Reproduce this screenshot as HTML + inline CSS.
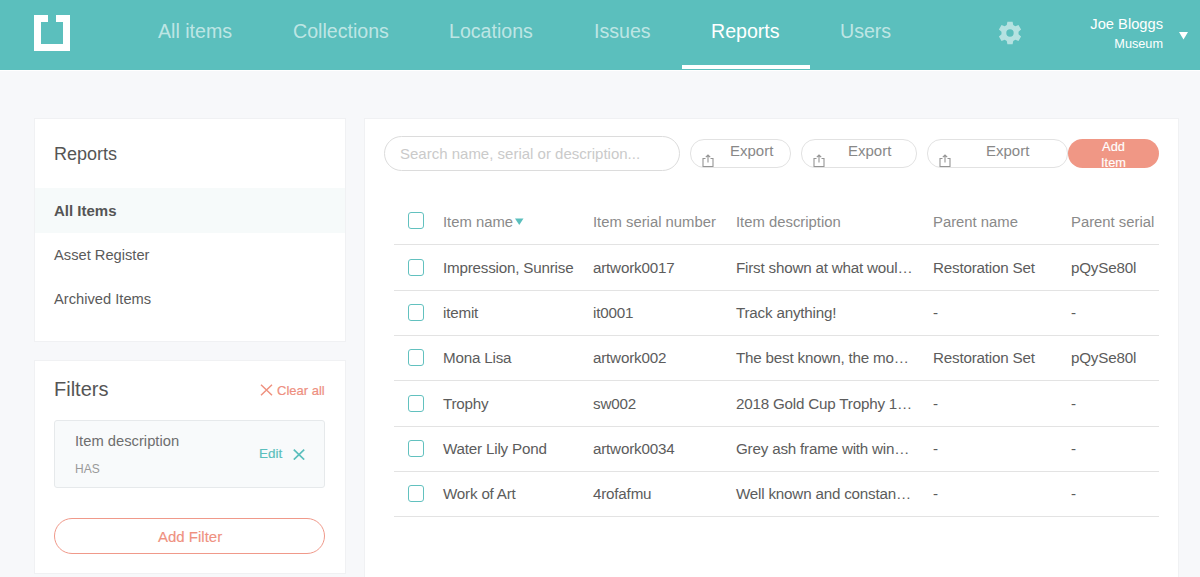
<!DOCTYPE html>
<html><head><meta charset="utf-8">
<style>
*{box-sizing:border-box;margin:0;padding:0}
html,body{width:1200px;height:577px;overflow:hidden}
body{background:#f7f8fa;font-family:"Liberation Sans",sans-serif;position:relative;color:#555}
.abs{position:absolute;white-space:nowrap}
#hdr{position:absolute;left:0;top:0;width:1200px;height:70px;background:#5bbfbd}
.logo{position:absolute;left:34px;top:15px;width:36px;height:36px;border:7px solid #fff}
.logo:after{content:"";position:absolute;left:7px;top:-7px;width:8px;height:7px;background:#5bbfbd}
.nav{position:absolute;top:20px;font-size:19.6px;color:rgba(255,255,255,.62);line-height:22px}
.nav.act{color:#fff}
.uline{position:absolute;left:682px;top:65px;width:128px;height:4px;background:#fff}
.card{position:absolute;background:#fff;box-shadow:0 0 0 1px #f0f1f3}
.side{font-size:15px;color:#555}
td,th{font-weight:normal}
.cb{position:absolute;left:408px;width:16px;height:16.5px;border:1.7px solid #62c1bf;border-radius:3px}
.row{position:absolute;left:394px;width:765px;height:1px;background:#e3e3e3}
.cell{position:absolute;font-size:15.2px;letter-spacing:-0.2px;color:#5c5c5c;white-space:nowrap;line-height:18px}
.hcell{position:absolute;font-size:14.85px;color:#8a8a8a;white-space:nowrap;line-height:18px}
.exp{position:absolute;top:139px;height:28.5px;border:1px solid #e2e2e2;border-radius:14px;background:#fff}
.exp span{position:absolute;font-size:15px;color:#888;top:2px;line-height:18px}
.ico{position:absolute;top:14px;width:12px;height:13px}
</style></head><body>
<div id="hdr">
  <div class="logo"></div>
  <div class="nav" style="left:158px">All items</div>
  <div class="nav" style="left:293px">Collections</div>
  <div class="nav" style="left:449px">Locations</div>
  <div class="nav" style="left:594px">Issues</div>
  <div class="nav act" style="left:711px">Reports</div>
  <div class="nav" style="left:840px">Users</div>
  <svg class="abs" style="left:997.5px;top:20.7px" width="24" height="24" viewBox="0 0 24 24"><path fill="rgba(255,255,255,.55)" fill-rule="evenodd" d="M8.78 4.03 L9.39 0.70 L14.61 0.70 L15.22 4.03 L17.29 5.22 L20.48 4.09 L23.09 8.61 L20.52 10.80 L20.52 13.20 L23.09 15.39 L20.48 19.91 L17.29 18.78 L15.22 19.97 L14.61 23.30 L9.39 23.30 L8.78 19.97 L6.71 18.78 L3.52 19.91 L0.91 15.39 L3.48 13.20 L3.48 10.80 L0.91 8.61 L3.52 4.09 L6.71 5.22Z M12 8.3a3.7 3.7 0 1 0 0 7.4a3.7 3.7 0 1 0 0-7.4Z"/></svg>
  <div class="abs" style="right:37px;top:15.5px;font-size:14.7px;color:#fff;line-height:17px">Joe Bloggs</div>
  <div class="abs" style="right:37px;top:36.5px;font-size:12.7px;color:#fff;line-height:14px">Museum</div>
  <svg class="abs" style="left:1178.5px;top:32px" width="9" height="8"><path d="M0 0h9L4.5 7.5z" fill="#fff"/></svg>
  <div class="uline"></div>
  <div class="abs" style="left:0;top:70px;width:1200px;height:1px;background:#fff"></div>
</div>

<!-- left card 1 -->
<div class="card" style="left:35px;top:119px;width:310px;height:222px">
  <div class="abs" style="left:19px;top:25px;font-size:18px;color:#555">Reports</div>
  <div class="abs" style="left:0;top:69px;width:310px;height:45px;background:#f6fafa"></div>
  <div class="abs" style="left:19px;top:83px;font-size:15px;font-weight:bold;color:#555">All Items</div>
  <div class="abs" style="left:19px;top:128px;font-size:14.7px;color:#5a5a5a">Asset Register</div>
  <div class="abs" style="left:19px;top:172px;font-size:14.7px;color:#5a5a5a">Archived Items</div>
</div>

<!-- left card 2 -->
<div class="card" style="left:35px;top:361px;width:310px;height:212px">
  <div class="abs" style="left:19px;top:17px;font-size:20px;color:#555">Filters</div>
  <svg class="abs" style="left:224.5px;top:23px" width="13" height="12"><path d="M1 0.8L12 11.2M12 0.8L1 11.2" stroke="#ef917f" stroke-width="1.5"/></svg>
  <div class="abs" style="left:242px;top:22px;font-size:13px;color:#ee8f7f;-webkit-text-stroke:.2px #ee8f7f">Clear all</div>
  <div class="abs" style="left:19px;top:59px;width:271px;height:68px;background:#f8fafb;border:1px solid #e6e9eb;border-radius:3px"></div>
  <div class="abs" style="left:40px;top:72px;font-size:14.75px;color:#6e6e6e">Item description</div>
  <div class="abs" style="left:40px;top:101px;font-size:12px;color:#999">HAS</div>
  <div class="abs" style="left:224px;top:85px;font-size:13.5px;color:#5bbfbd;-webkit-text-stroke:.2px #5bbfbd">Edit</div>
  <svg class="abs" style="left:257.5px;top:87.5px" width="12" height="11"><path d="M0.8 0.6L11.2 10.6M11.2 0.6L0.8 10.6" stroke="#5bbfbd" stroke-width="1.7"/></svg>
  <div class="abs" style="left:19px;top:157px;width:271px;height:36px;border:1px solid #f0998a;border-radius:18px"></div>
  <div class="abs" style="left:123px;top:167px;font-size:15px;color:#ef917f;-webkit-text-stroke:.15px #ef917f">Add Filter</div>
</div>

<!-- main card -->
<div class="card" style="left:365px;top:119px;width:813px;height:470px">
  <div class="abs" style="left:19px;top:17px;width:296px;height:35px;border:1px solid #dcdcdc;border-radius:18px"></div>
  <div class="abs" style="left:35px;top:26px;font-size:15px;color:#cacaca">Search name, serial or description...</div>
</div>

<div class="exp" style="left:690px;width:101px"><svg class="ico" style="left:11px" viewBox="0 0 12 13"><path d="M3.5 4.5H1v8h10v-8H8.5M6 8.5V1M3.8 3.2L6 1l2.2 2.2" fill="none" stroke="#959595" stroke-width="1.1"/></svg><span style="left:39px">Export</span></div>
<div class="exp" style="left:801px;width:116px"><svg class="ico" style="left:11px" viewBox="0 0 12 13"><path d="M3.5 4.5H1v8h10v-8H8.5M6 8.5V1M3.8 3.2L6 1l2.2 2.2" fill="none" stroke="#959595" stroke-width="1.1"/></svg><span style="left:46px">Export</span></div>
<div class="exp" style="left:927px;width:141px"><svg class="ico" style="left:11px" viewBox="0 0 12 13"><path d="M3.5 4.5H1v8h10v-8H8.5M6 8.5V1M3.8 3.2L6 1l2.2 2.2" fill="none" stroke="#959595" stroke-width="1.1"/></svg><span style="left:58px">Export</span></div>
<div class="abs" style="left:1068px;top:139px;width:91px;height:29px;background:#f09785;border-radius:15px;overflow:hidden">
  <div class="abs" style="left:0;width:91px;text-align:center;top:-0.3px;font-size:12.8px;line-height:16.3px;color:#fff;-webkit-text-stroke:.15px #fff">Add<br>Item</div>
</div>

<!-- table -->
<div class="cb" style="top:212px"></div>
<div class="hcell" style="left:443px;top:213px">Item name<svg width="8.5" height="7" style="margin-left:2px;vertical-align:2.5px"><path d="M0 0.5h8.5L4.25 7z" fill="#5bbfbd"/></svg></div>
<div class="hcell" style="left:593px;top:213px">Item serial number</div>
<div class="hcell" style="left:736px;top:213px">Item description</div>
<div class="hcell" style="left:933px;top:213px">Parent name</div>
<div class="hcell" style="left:1071px;top:213px">Parent serial</div>
<div class="row" style="top:244px"></div>

<div class="cb" style="top:259px"></div>
<div class="cell" style="left:443px;top:259px">Impression, Sunrise</div>
<div class="cell" style="left:593px;top:259px">artwork0017</div>
<div class="cell" style="left:736px;top:259px">First shown at what woul…</div>
<div class="cell" style="left:933px;top:259px">Restoration Set</div>
<div class="cell" style="left:1071px;top:259px">pQySe80l</div>
<div class="row" style="top:290px"></div>

<div class="cb" style="top:304px"></div>
<div class="cell" style="left:443px;top:304px">itemit</div>
<div class="cell" style="left:593px;top:304px">it0001</div>
<div class="cell" style="left:736px;top:304px">Track anything!</div>
<div class="cell" style="left:933px;top:304px">-</div>
<div class="cell" style="left:1071px;top:304px">-</div>
<div class="row" style="top:335px"></div>

<div class="cb" style="top:349px"></div>
<div class="cell" style="left:443px;top:349px">Mona Lisa</div>
<div class="cell" style="left:593px;top:349px">artwork002</div>
<div class="cell" style="left:736px;top:349px">The best known, the mo…</div>
<div class="cell" style="left:933px;top:349px">Restoration Set</div>
<div class="cell" style="left:1071px;top:349px">pQySe80l</div>
<div class="row" style="top:380px"></div>

<div class="cb" style="top:395px"></div>
<div class="cell" style="left:443px;top:395px">Trophy</div>
<div class="cell" style="left:593px;top:395px">sw002</div>
<div class="cell" style="left:736px;top:395px">2018 Gold Cup Trophy 1…</div>
<div class="cell" style="left:933px;top:395px">-</div>
<div class="cell" style="left:1071px;top:395px">-</div>
<div class="row" style="top:426px"></div>

<div class="cb" style="top:440px"></div>
<div class="cell" style="left:443px;top:440px">Water Lily Pond</div>
<div class="cell" style="left:593px;top:440px">artwork0034</div>
<div class="cell" style="left:736px;top:440px">Grey ash frame with win…</div>
<div class="cell" style="left:933px;top:440px">-</div>
<div class="cell" style="left:1071px;top:440px">-</div>
<div class="row" style="top:471px"></div>

<div class="cb" style="top:485px"></div>
<div class="cell" style="left:443px;top:485px">Work of Art</div>
<div class="cell" style="left:593px;top:485px">4rofafmu</div>
<div class="cell" style="left:736px;top:485px">Well known and constan…</div>
<div class="cell" style="left:933px;top:485px">-</div>
<div class="cell" style="left:1071px;top:485px">-</div>
<div class="row" style="top:516px"></div>
</body></html>
